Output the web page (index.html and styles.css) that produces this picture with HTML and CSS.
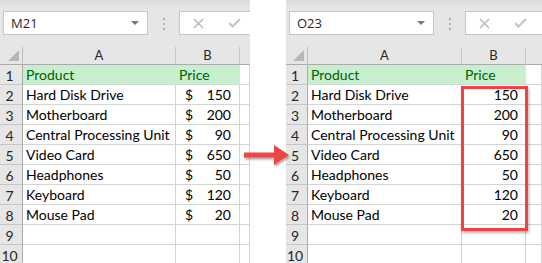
FILE: index.html
```html
<!DOCTYPE html>
<html lang="en">
<head>
    <meta charset="UTF-8">
    <title>Remove currency format</title>
    <link rel="stylesheet" href="styles.css">
</head>
<body>
    <div class="stage">
        <!-- before: prices in accounting format -->
        <div class="panel before">
            <div class="toolbar">
                <div class="name-box">M21<span class="caret"></span></div>
                <div class="dots"><i></i><i></i><i></i></div>
                <div class="formula-box">
                    <svg class="fx-btn" width="11" height="11" viewBox="0 0 11 11"><path d="M1 1 L10 10 M10 1 L1 10" stroke="#b4b4b4" stroke-width="1.3"/></svg>
                    <svg class="fx-btn check" width="13" height="10" viewBox="0 0 13 10"><path d="M1 5 L4.5 8.5 L12 1" fill="none" stroke="#c4c4c4" stroke-width="2"/></svg>
                </div>
            </div>
            <div class="sheet">
                <div class="corner"></div><div class="col-head">A</div><div class="col-head">B</div><div class="col-head blank"></div>

                <div class="row-head">1</div><div class="cell good">Product</div><div class="cell good">Price</div><div class="cell"></div>
                <div class="row-head">2</div><div class="cell">Hard Disk Drive</div><div class="cell acct"><span>$</span><span>150</span></div><div class="cell"></div>
                <div class="row-head">3</div><div class="cell">Motherboard</div><div class="cell acct"><span>$</span><span>200</span></div><div class="cell"></div>
                <div class="row-head">4</div><div class="cell">Central Processing Unit</div><div class="cell acct"><span>$</span><span>90</span></div><div class="cell"></div>
                <div class="row-head">5</div><div class="cell">Video Card</div><div class="cell acct"><span>$</span><span>650</span></div><div class="cell"></div>
                <div class="row-head">6</div><div class="cell">Headphones</div><div class="cell acct"><span>$</span><span>50</span></div><div class="cell"></div>
                <div class="row-head">7</div><div class="cell">Keyboard</div><div class="cell acct"><span>$</span><span>120</span></div><div class="cell"></div>
                <div class="row-head">8</div><div class="cell">Mouse Pad</div><div class="cell acct"><span>$</span><span>20</span></div><div class="cell"></div>
                <div class="row-head">9</div><div class="cell"></div><div class="cell"></div><div class="cell"></div>
                <div class="row-head">10</div><div class="cell"></div><div class="cell"></div><div class="cell"></div>
            </div>
        </div>

        <div class="gap"></div>

        <!-- after: plain numbers -->
        <div class="panel after">
            <div class="toolbar">
                <div class="name-box">O23<span class="caret"></span></div>
                <div class="dots"><i></i><i></i><i></i></div>
                <div class="formula-box">
                    <svg class="fx-btn" width="11" height="11" viewBox="0 0 11 11"><path d="M1 1 L10 10 M10 1 L1 10" stroke="#b4b4b4" stroke-width="1.3"/></svg>
                    <svg class="fx-btn check" width="13" height="10" viewBox="0 0 13 10"><path d="M1 5 L4.5 8.5 L12 1" fill="none" stroke="#c4c4c4" stroke-width="2"/></svg>
                </div>
            </div>
            <div class="sheet">
                <div class="corner"></div><div class="col-head">A</div><div class="col-head">B</div><div class="col-head blank"></div>

                <div class="row-head">1</div><div class="cell good">Product</div><div class="cell good">Price</div><div class="cell"></div>
                <div class="row-head">2</div><div class="cell">Hard Disk Drive</div><div class="cell num">150</div><div class="cell"></div>
                <div class="row-head">3</div><div class="cell">Motherboard</div><div class="cell num">200</div><div class="cell"></div>
                <div class="row-head">4</div><div class="cell">Central Processing Unit</div><div class="cell num">90</div><div class="cell"></div>
                <div class="row-head">5</div><div class="cell">Video Card</div><div class="cell num">650</div><div class="cell"></div>
                <div class="row-head">6</div><div class="cell">Headphones</div><div class="cell num">50</div><div class="cell"></div>
                <div class="row-head">7</div><div class="cell">Keyboard</div><div class="cell num">120</div><div class="cell"></div>
                <div class="row-head">8</div><div class="cell">Mouse Pad</div><div class="cell num">20</div><div class="cell"></div>
                <div class="row-head">9</div><div class="cell"></div><div class="cell"></div><div class="cell"></div>
                <div class="row-head">10</div><div class="cell"></div><div class="cell"></div><div class="cell"></div>
            </div>
            <div class="highlight"></div>
        </div>

        <svg class="arrow" width="52" height="30" viewBox="0 0 52 30">
            <defs>
                <filter id="shadow" x="-20%" y="-30%" width="140%" height="170%">
                    <feDropShadow dx="1" dy="2" stdDeviation="1.2" flood-color="#000" flood-opacity="0.35"/>
                </filter>
            </defs>
            <path d="M3 11.5 H33 V4 L48 14 L33 24 V16.5 H3 Z" fill="#ee4444" filter="url(#shadow)"/>
        </svg>
    </div>
</body>
</html>
```

FILE: styles.css
```css
* {
    box-sizing: border-box;
}
body {
    margin: 0;
    background: #fff;
    font-family: Lato, 'Liberation Sans', Arial, sans-serif;
    overflow: hidden;
}
.stage {
    position: relative;
    display: flex;
    width: 542px;
    height: 263px;
    overflow: hidden;
}
.panel {
    position: relative;
    overflow: hidden;
}
.panel.before {
    width: 250px;
}
.panel.after {
    width: 256px;
}
.gap {
    width: 36px;
}

/* name box + formula bar */
.toolbar {
    display: flex;
    align-items: flex-start;
    height: 47px;
    padding: 11px 0 0 3px;
    background: linear-gradient(#dcdcdc, #e6e6e6 9px, #e6e6e6);
}
.name-box {
    position: relative;
    width: 145px;
    height: 24px;
    padding-left: 7px;
    background: #fff;
    border: 1px solid #c6c6c6;
    font-family: 'Segoe UI', 'Open Sans', 'Liberation Sans', sans-serif;
    font-size: 13px;
    line-height: 22px;
    color: #262626;
}
.caret {
    position: absolute;
    right: 8px;
    top: 9px;
    border-left: 4px solid transparent;
    border-right: 4px solid transparent;
    border-top: 4px solid #777;
}
.dots {
    display: flex;
    flex-direction: column;
    align-items: center;
    gap: 3px;
    width: 31px;
    padding-top: 7px;
}
.dots i {
    width: 2px;
    height: 2px;
    background: #b0b0b0;
}
.formula-box {
    display: flex;
    align-items: center;
    flex: 1;
    height: 24px;
    background: #fff;
    border: 1px solid #c6c6c6;
    border-right: none;
}
.fx-btn {
    margin-left: 13px;
}
.fx-btn.check {
    margin-left: 24px;
}

/* grid */
.sheet {
    display: grid;
    grid-template-columns: 23px 153px 64px 1fr;
    grid-auto-rows: 20px;
    grid-template-rows: 18px;
    font-size: 14px;
    color: #000;
}
.after .sheet {
    grid-template-columns: 22px 154px 64px 1fr;
}
.corner,
.col-head,
.row-head {
    background: #e6e6e6;
    color: #262626;
}
.corner {
    position: relative;
    border-right: 1px solid #bdbdbd;
    border-bottom: 1px solid #ababab;
}
.corner::after {
    content: "";
    position: absolute;
    right: 3px;
    bottom: 3px;
    border-left: 11px solid transparent;
    border-bottom: 11px solid #b7b7b7;
}
.col-head {
    text-align: center;
    line-height: 17px;
    font-size: 13px;
    border-right: 1px solid #c6c6c6;
    border-bottom: 1px solid #ababab;
}
.col-head.blank {
    border-right: none;
}
.row-head {
    text-align: center;
    line-height: 21px;
    font-size: 14px;
    padding-right: 3px;
    border-right: 1px solid #ababab;
    border-bottom: 1px solid #c6c6c6;
}
.cell {
    padding: 0 3px;
    line-height: 20px;
    white-space: nowrap;
    border-right: 1px solid #d4d4d4;
    border-bottom: 1px solid #d4d4d4;
}
.cell.good {
    background: #c6efce;
    color: #006100;
    border-right-color: #c6efce;
}
.cell.acct {
    display: flex;
    justify-content: space-between;
    padding: 0 8px 0 9px;
}
.cell.num {
    text-align: right;
    padding-right: 7px;
}

/* overlays */
.highlight {
    position: absolute;
    left: 175px;
    top: 86px;
    width: 67px;
    height: 145px;
    border: 3px solid #ee4444;
    box-shadow: 1px 2px 3px rgba(0, 0, 0, 0.3);
}
.arrow {
    position: absolute;
    left: 241px;
    top: 141px;
}
```
